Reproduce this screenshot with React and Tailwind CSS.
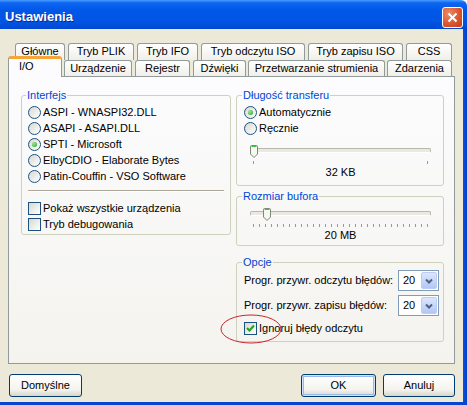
import React from "react";

const radioBox =
  "w-[13px] h-[13px] shrink-0 rounded-full border border-[#1c5180] bg-[linear-gradient(135deg,#d8d8cf,#ffffff)] flex items-center justify-center";
const checkBox =
  "w-[13px] h-[13px] shrink-0 border border-[#1c5180] bg-[linear-gradient(135deg,#d8d8cf,#ffffff)] flex items-center justify-center";

function Radio({ checked, label }) {
  return (
    <div className="flex items-center h-[16px] gap-[2px]">
      <span className={radioBox}>
        {checked && (
          <span className="w-[5px] h-[5px] rounded-full bg-[radial-gradient(circle_at_35%_35%,#9be896,#21a121)]" />
        )}
      </span>
      <span>{label}</span>
    </div>
  );
}

function Check({ checked, label }) {
  return (
    <div className="flex items-center h-[16px] gap-[2px]">
      <span className={checkBox}>
        {checked && (
          <svg width="9" height="9" viewBox="0 0 9 9">
            <path d="M1 4 L3.5 6.5 L8 1.5" stroke="#21a121" strokeWidth="2" fill="none" />
          </svg>
        )}
      </span>
      <span>{label}</span>
    </div>
  );
}

function Group({ title, className, children }) {
  return (
    <fieldset className={"border border-[#d0d0bf] rounded-[3px] " + className}>
      <legend className="ml-[-2px] px-[1px] leading-[13px] text-[#0046d5]">{title}</legend>
      {children}
    </fieldset>
  );
}

function Thumb() {
  return (
    <svg width="8" height="13" viewBox="0 0 8 13">
      <path d="M0.5 1.5 Q0.5 0.5 1.5 0.5 H6.5 Q7.5 0.5 7.5 1.5 V9 L4 12.5 L0.5 9 Z" fill="#f7f7f3" stroke="#7b8a73" />
      <path d="M1.5 1.5 H6.5" stroke="#3fc93a" />
    </svg>
  );
}

function Slider({ pos, ticks, label }) {
  return (
    <div className="ml-[6px] w-[181px]">
      <div className="relative h-[13px]">
        <div className="absolute left-0 right-0 top-[3px] h-[5px] rounded-[2px] border border-[#b9b8ad] border-b-white bg-[#ebeae2]" />
        <div className="absolute top-0" style={{ left: pos }}>
          <Thumb />
        </div>
      </div>
      <div className="flex justify-between px-[3px] mt-[3px] h-[3px]">
        {Array.from({ length: ticks }).map((_, i) => (
          <span key={i} className="w-px h-[3px] bg-[#9a9a90]" />
        ))}
      </div>
      <div className="text-center leading-[13px] mt-[2px]">{label}</div>
    </div>
  );
}

function Combo() {
  return (
    <div className="ml-auto w-[41px] h-[21px] border border-[#7f9db9] bg-white flex items-center justify-between pl-[4px] pr-[1px]">
      <span>20</span>
      <span className="w-[16px] h-[17px] rounded-[2px] border border-[#bccdf5] bg-[linear-gradient(to_bottom,#dce6fd,#b3c7f6)] flex items-center justify-center">
        <svg width="8" height="6" viewBox="0 0 8 6">
          <path d="M1 1.5 L4 4.5 L7 1.5" stroke="#4d6185" strokeWidth="2" fill="none" />
        </svg>
      </span>
    </div>
  );
}

const backTab =
  "h-[17px] rounded-t-[3px] border border-b-0 border-[#919b9c] bg-[linear-gradient(to_bottom,#ffffff,#f0efe9)] text-center pt-[1px] leading-[13px]";
const frontTab =
  "h-[16px] rounded-t-[3px] border border-b-0 border-[#919b9c] bg-[linear-gradient(to_bottom,#ffffff,#f0efe9)] text-center pt-[1px] leading-[13px]";
const btn =
  "h-[23px] rounded-[3px] border border-[#003c74] bg-[linear-gradient(to_bottom,#ffffff,#f4f3ee_70%,#d9d5ca)] flex items-center justify-center";

export default function App() {
  return (
    <div className="relative w-[467px] h-[405px] overflow-hidden flex flex-col font-['Liberation_Sans',Arial,sans-serif] text-[11px] text-black">
      {/* Title bar */}
      <div className="h-[29px] shrink-0 flex items-center justify-between pt-[5px] pl-[5px] pr-[4px] bg-[linear-gradient(to_bottom,#4a9bff_0%,#0d66f2_10%,#0058e8_35%,#0054e3_75%,#0048d0_100%)] rounded-tr-[6px]">
        <span className="text-[13px] font-bold text-white [text-shadow:1px_1px_#0a2a8a]">Ustawienia</span>
        <span className="w-[21px] h-[21px] rounded-[3px] border border-white bg-[radial-gradient(circle_at_30%_30%,#f08a66,#d9522b_60%,#c03d1a)] flex items-center justify-center">
          <svg width="11" height="11" viewBox="0 0 11 11">
            <path d="M1.5 1.5 L9.5 9.5 M9.5 1.5 L1.5 9.5" stroke="#fff" strokeWidth="2" />
          </svg>
        </span>
      </div>

      <div className="flex-1 flex">
        <div className="flex-1 bg-[#ece9d8] flex flex-col">
          {/* Tabs back row */}
          <div className="flex pl-[15px] pt-[14px] gap-[3px]">
            <div className={backTab + " w-[50px]"}>Główne</div>
            <div className={backTab + " w-[66px]"}>Tryb PLIK</div>
            <div className={backTab + " w-[61px]"}>Tryb IFO</div>
            <div className={backTab + " w-[104px]"}>Tryb odczytu ISO</div>
            <div className={backTab + " w-[95px]"}>Tryb zapisu ISO</div>
            <div className={backTab + " w-[46px]"}>CSS</div>
          </div>

          {/* Tabs front row */}
          <div className="relative z-10 flex items-end pl-[8px] -mt-[4px] h-[20px]">
            <div className="w-[54px] h-[21px] -mb-px rounded-t-[3px] border-x border-[#919b9c] border-t-[3px] border-t-[#f5a53a] bg-[#fcfcfe] pl-[10px] leading-[13px] pt-[1px]">
              I/O
            </div>
            <div className={frontTab + " w-[68px] ml-[2px]"}>Urządzenie</div>
            <div className={frontTab + " w-[55px] ml-[3px]"}>Rejestr</div>
            <div className={frontTab + " w-[53px] ml-[3px]"}>Dźwięki</div>
            <div className={frontTab + " w-[137px] ml-[2px]"}>Przetwarzanie strumienia</div>
            <div className={frontTab + " w-[65px] ml-[2px]"}>Zdarzenia</div>
          </div>

          {/* Panel */}
          <div className="ml-[8px] w-[447px] h-[288px] border border-[#919b9c] bg-[linear-gradient(to_bottom,#fcfcfe,#f4f3ee)] flex pl-[12px] pt-[12px] gap-[5px]">
            <div className="w-[210px]">
              <Group title="Interfejs" className="pl-[6px] pt-[2px] pb-[2px]">
                <Radio label="ASPI - WNASPI32.DLL" />
                <Radio label="ASAPI - ASAPI.DLL" />
                <Radio checked label="SPTI - Microsoft" />
                <Radio label="ElbyCDIO - Elaborate Bytes" />
                <Radio label="Patin-Couffin - VSO Software" />
                <div className="mt-[6px] mr-[6px] h-[2px] border-t border-[#aca899] border-b border-b-white" />
                <div className="mt-[8px]">
                  <Check label="Pokaż wszystkie urządzenia" />
                  <Check label="Tryb debugowania" />
                </div>
              </Group>
            </div>

            <div className="w-[208px] flex flex-col">
              <Group title="Długość transferu" className="pl-[7px] pt-[2px] pb-[6px]">
                <Radio checked label="Automatycznie" />
                <Radio label="Ręcznie" />
                <div className="mt-[9px]">
                  <Slider pos={0} ticks={2} label="32 KB" />
                </div>
              </Group>

              <Group title="Rozmiar bufora" className="mt-[4px] pl-[7px] pt-[5px] pb-[3px]">
                <Slider pos={13} ticks={30} label="20 MB" />
              </Group>

              <Group title="Opcje" className="mt-[10px] pl-[7px] pr-[4px] pt-[1px] pb-[5px]">
                <div className="flex items-center h-[21px]">
                  <span>Progr. przywr. odczytu błędów:</span>
                  <Combo />
                </div>
                <div className="flex items-center h-[21px] mt-[4px]">
                  <span>Progr. przywr. zapisu błędów:</span>
                  <Combo />
                </div>
                <div className="mt-[4px]">
                  <Check checked label="Ignoruj błędy odczytu" />
                </div>
              </Group>
            </div>
          </div>

          {/* Buttons */}
          <div className="flex mt-[10px] pl-[9px] pr-[8px]">
            <div className={btn + " w-[73px]"}>Domyślne</div>
            <div className={btn + " w-[75px] ml-auto shadow-[inset_0_0_0_1px_#cee3fc,inset_0_0_0_2px_#98b8ea]"}>OK</div>
            <div className={btn + " w-[72px] ml-[7px]"}>Anuluj</div>
          </div>
        </div>
        <div className="w-[4px] bg-[linear-gradient(to_right,#0a4fe0,#0040c8)]" />
      </div>
      <div className="h-[3px] shrink-0 bg-[#0845d0]" />

      {/* red annotation ellipse */}
      <svg className="absolute left-[220px] top-[314px]" width="62" height="30" viewBox="0 0 62 30">
        <ellipse cx="31" cy="15" rx="30" ry="14" fill="none" stroke="#c8232c" strokeWidth="1" />
      </svg>
    </div>
  );
}
